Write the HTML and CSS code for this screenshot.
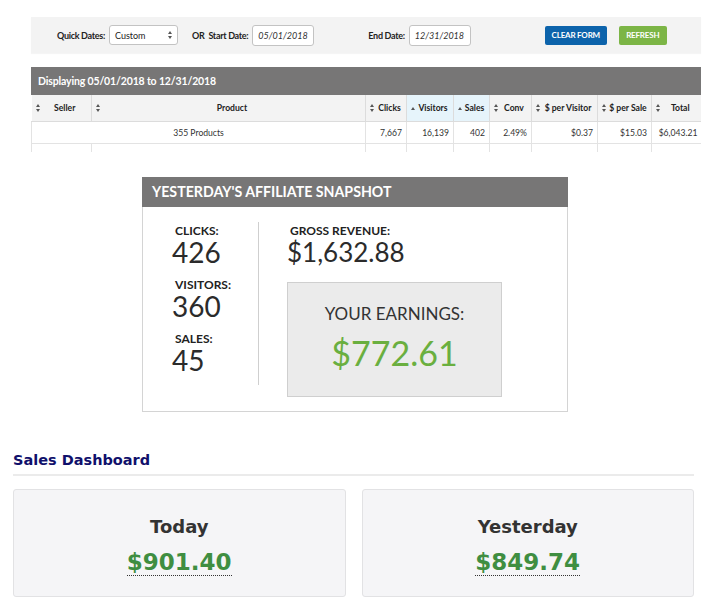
FILE: index.html
```html
<!DOCTYPE html>
<html>
<head>
<meta charset="utf-8">
<link rel="stylesheet" href="styles.css">
</head>
<body>
<div class="toolbar">
  <span class="lbl">Quick Dates:</span>
  <div class="select"><span>Custom</span><span class="sort"></span></div>
  <span class="lbl or">OR</span><span class="lbl">Start Date:</span>
  <div class="input">05/01/2018</div>
  <span class="lbl end">End Date:</span>
  <div class="input">12/31/2018</div>
  <button class="btn btn-blue">CLEAR FORM</button>
  <button class="btn btn-green">REFRESH</button>
</div>

<div class="report">
  <div class="report-title">Displaying 05/01/2018 to 12/31/2018</div>
  <table class="grid">
    <colgroup>
      <col class="c-seller"><col class="c-product"><col class="c-clicks"><col class="c-visitors"><col class="c-sales"><col class="c-conv"><col class="c-pv"><col class="c-ps"><col class="c-total">
    </colgroup>
    <thead>
      <tr>
        <th><div class="th"><span class="sort"></span><span class="t">Seller</span></div></th>
        <th><div class="th"><span class="sort"></span><span class="t">Product</span></div></th>
        <th><div class="th"><span class="sort"></span><span class="t">Clicks</span></div></th>
        <th class="active"><div class="th"><span class="up"></span><span class="t">Visitors</span></div></th>
        <th class="active"><div class="th"><span class="up"></span><span class="t">Sales</span></div></th>
        <th><div class="th"><span class="sort"></span><span class="t">Conv</span></div></th>
        <th><div class="th"><span class="sort"></span><span class="t">$ per Visitor</span></div></th>
        <th><div class="th"><span class="sort"></span><span class="t">$ per Sale</span></div></th>
        <th><div class="th"><span class="sort"></span><span class="t">Total</span></div></th>
      </tr>
    </thead>
    <tbody>
      <tr>
        <td colspan="2" class="center">355 Products</td>
        <td>7,667</td><td>16,139</td><td>402</td><td>2.49%</td><td>$0.37</td><td>$15.03</td><td>$6,043.21</td>
      </tr>
      <tr class="blank">
        <td></td><td></td><td></td><td></td><td></td><td></td><td></td><td></td><td></td>
      </tr>
    </tbody>
  </table>
</div>

<div class="snapshot">
  <div class="snap-head">YESTERDAY'S AFFILIATE SNAPSHOT</div>
  <div class="snap-body">
    <div class="snap-left">
      <div class="stat-lbl">CLICKS:</div>
      <div class="stat-val">426</div>
      <div class="stat-lbl gap">VISITORS:</div>
      <div class="stat-val">360</div>
      <div class="stat-lbl gap">SALES:</div>
      <div class="stat-val">45</div>
    </div>
    <div class="snap-right">
      <div class="stat-lbl">GROSS REVENUE:</div>
      <div class="stat-val gross">$1,632.88</div>
      <div class="earn">
        <div class="earn-lbl">YOUR EARNINGS:</div>
        <div class="earn-val">$772.61</div>
      </div>
    </div>
  </div>
</div>

<div class="dash">
  <h2 class="dash-title">Sales Dashboard</h2>
  <div class="cards">
    <div class="card">
      <div class="card-title">Today</div>
      <div class="card-val"><span>$901.40</span></div>
    </div>
    <div class="card">
      <div class="card-title">Yesterday</div>
      <div class="card-val"><span>$849.74</span></div>
    </div>
  </div>
</div>
</body>
</html>
```

FILE: styles.css
```css
html { overflow: hidden; background: #fff; }
body { margin: 0; padding: 0; font-family: Lato, "Open Sans", sans-serif; color: #222; }

.toolbar {
  margin: 17px 0 0 31px;
  width: 644px;
  height: 36px;
  padding-left: 26px;
  background: #f3f3f3;
  display: flex;
  align-items: center;
  box-shadow: 0 1px 1px rgba(0,0,0,0.04);
}
.lbl { font-size: 9px; font-weight: 700; color: #222; letter-spacing: -0.3px; }
.lbl.or { margin-left: 14px; margin-right: 4px; }
.lbl.end { margin-left: 54px; }
.select {
  margin-left: 4px;
  width: 69px; height: 20px; box-sizing: border-box;
  border: 1px solid #c3c3c3; border-radius: 3px; background: #fff;
  display: flex; align-items: center; justify-content: space-between;
  padding: 0 4px 0 5px; font-size: 9px;
}
.input {
  margin-left: 4px;
  width: 62px; height: 21px; box-sizing: border-box;
  border: 1px solid #c3c3c3; border-radius: 3px; background: #fff;
  font-size: 9px; font-style: italic; font-synthesis: style; color: #333;
  display: flex; align-items: center; padding-left: 5px;
}
.btn {
  height: 19px; border: 0; border-radius: 2px; color: #fff;
  font-family: Lato, sans-serif; font-weight: 700; font-size: 8px; letter-spacing: -0.2px;
  padding: 0; display: flex; align-items: center; justify-content: center;
}
.btn-blue { background: #0c63ab; width: 62px; margin-left: 74px; }
.btn-green { background: #7cb546; width: 48px; margin-left: 12px; }

.sort { display: inline-block; width: 5px; height: 8px; position: relative; flex: none; }
.sort::before, .sort::after {
  content: ""; position: absolute; left: 0;
  border-left: 2.5px solid transparent; border-right: 2.5px solid transparent;
}
.sort::before { top: 0; border-bottom: 3px solid #555; }
.sort::after { bottom: 0; border-top: 3px solid #555; }
.up { display: inline-block; width: 0; height: 0; flex: none;
  border-left: 2.5px solid transparent; border-right: 2.5px solid transparent;
  border-bottom: 3px solid #555; }

.report { margin: 14px 0 0 31px; width: 670px; height: 85px; overflow: hidden; }
.report-title {
  height: 28px; background: #777676; color: #fff;
  font-weight: 700; font-size: 10.5px; letter-spacing: -0.15px; line-height: 28px; padding-left: 7px;
}
.grid { border-collapse: collapse; table-layout: fixed; width: 670px; font-size: 8.6px; }
.c-seller { width: 60px; } .c-product { width: 274px; } .c-clicks { width: 41px; }
.c-visitors { width: 47px; } .c-sales { width: 36px; } .c-conv { width: 42px; }
.c-pv { width: 66px; } .c-ps { width: 54px; } .c-total { width: 50px; }
.grid th {
  height: 26px; padding: 0; background: #f3f3f3; font-weight: 700; color: #222;
  border-left: 1px solid #dcdcdc; border-bottom: 1px solid #dcdcdc;
}
.grid th:first-child { border-left: 0; }
.grid th.active { background: #e6f4fb; }
.th { display: flex; align-items: center; padding: 0 2px 0 4px; }
.th .t { flex: 1; text-align: center; white-space: nowrap; }
.grid td {
  height: 21px; padding: 0 4px 0 0; text-align: right; color: #333;
  border-left: 1px solid #e3e3e3; border-bottom: 1px solid #e3e3e3; white-space: nowrap;
}
.grid td.center { text-align: center; padding: 0; }

.snapshot {
  margin: 25px 0 0 142px; width: 424px;
  border: 1px solid #d4d4d4; border-top: 0;
}
.snap-head {
  height: 30px; background: #777676; color: #fff; margin: 0 -1px;
  font-weight: 700; font-size: 14.2px; line-height: 30px; padding-left: 10px;
}
.snap-body { display: flex; align-items: flex-start; padding: 15px 0 14px 29px; }
.snap-left { width: 86px; border-right: 1px solid #cfcfcf; padding: 3px 0 11px; }
.snap-right { padding-left: 28px; padding-top: 3px; }
.stat-lbl { font-size: 12px; font-weight: 700; line-height: 12px; padding-left: 3px; color: #222; }
.stat-lbl.gap { margin-top: 13px; }
.stat-val { font-size: 28px; line-height: 28px; margin-top: 1px; color: #2b2b2b; }
.stat-val.gross { font-size: 26px; }
.earn {
  margin-top: 16px; width: 213px; height: 93px;
  background: #ebebeb; border: 1px solid #cfcfcf;
  text-align: center; padding-top: 20px;
}
.earn-lbl { font-size: 17px; line-height: 22px; color: #333; }
.earn-val { font-size: 34px; line-height: 40px; margin-top: 8px; color: #6aaf3f; }

.dash { margin: 38px 28px 0 13px; }
.dash-title {
  margin: 0; font-family: "DejaVu Sans", Verdana, sans-serif; font-weight: 700;
  font-size: 14.5px; color: #10106b; line-height: 20px; padding-bottom: 4px;
  border-bottom: 2px solid #ebebeb;
}
.cards { display: flex; gap: 16px; margin-top: 13px; }
.card {
  flex: 1; background: #f5f5f7;
  border: 1px solid #e2e2e4; border-radius: 3px;
  text-align: center; padding-top: 26px; box-sizing: border-box; height: 108px;
}
.card-title { font-family: "DejaVu Sans", Verdana, sans-serif; font-weight: 700; font-size: 18px; line-height: 22px; color: #333; }
.card-val { margin-top: 11px; font-family: "DejaVu Sans", Verdana, sans-serif; font-weight: 700; font-size: 23px; line-height: 26px; color: #3f8e41; }
.card-val span { display: inline-block; border-bottom: 1px dotted #333; }
```
